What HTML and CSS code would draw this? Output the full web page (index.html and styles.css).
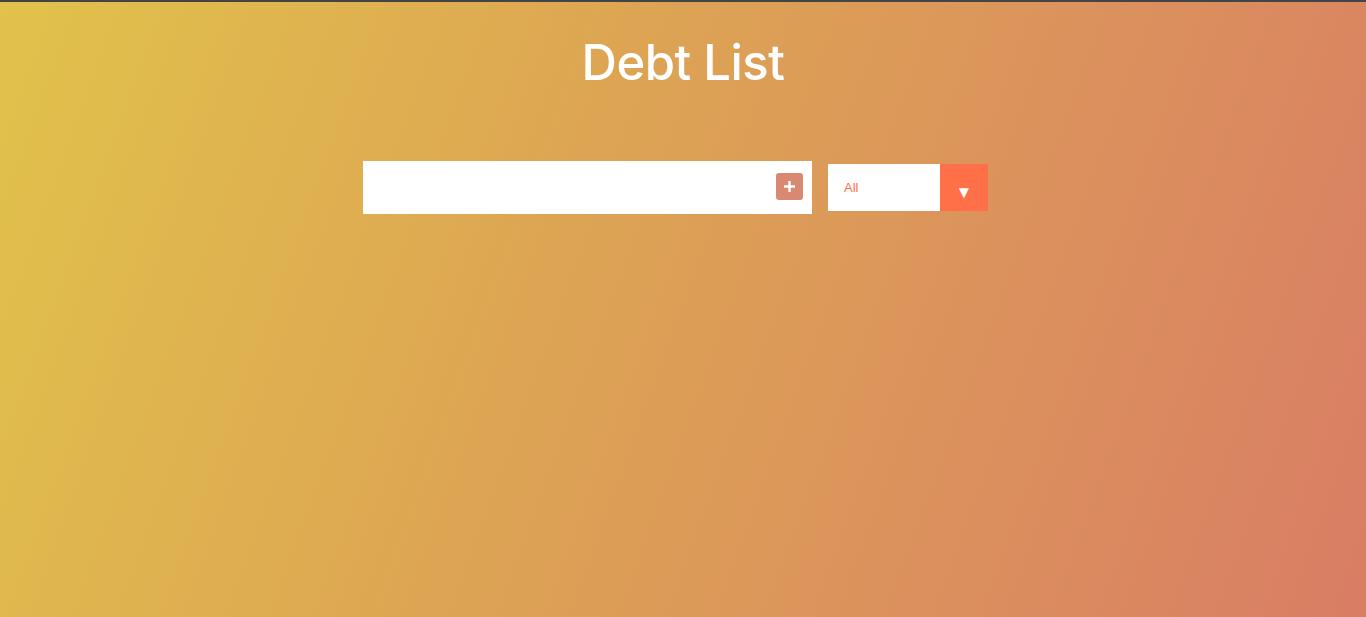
FILE: index.html
```html
<!DOCTYPE html>
<html>
<head>
<meta charset="utf-8">
<title>Debt List</title>
<link rel="stylesheet" href="styles.css">
</head>
<body>
<div class="topbar"></div>
<header class="header">
  <h1 class="title">Debt List</h1>
</header>
<form class="todo-form">
  <div class="input-wrap">
    <input class="todo-input" type="text">
    <button class="add-btn" type="button">
      <svg width="15" height="15" viewBox="0 0 15 15"><path d="M7.5 2v11M2 7.5h11" stroke="#fff" stroke-width="2.4" fill="none"/></svg>
    </button>
  </div>
  <div class="select">
    <span class="select-text">All</span>
    <span class="select-arrow">▼</span>
  </div>
</form>
</body>
</html>
```
FILE: styles.css
```css
* { box-sizing: border-box; }
html, body { height: 100%; }
body {
  margin: 0;
  font-family: "Open Sans", "Liberation Sans", sans-serif;
  background: linear-gradient(110deg, #e1c24b 0%, #dda553 40%, #db8e5e 75%, #d97d64 100%);
  color: #fff;
  overflow: hidden;
}
.topbar { height: 2px; background: #444; }
.header {
  display: flex;
  justify-content: center;
  padding-top: 30px;
}
.title {
  margin: 0;
  font-family: "Inter", "Noto Sans", sans-serif;
  font-weight: 500;
  font-size: 49px;
  letter-spacing: -0.5px;
  line-height: 62px;
}
.todo-form {
  display: flex;
  justify-content: center;
  align-items: center;
  gap: 16px;
  margin-top: 67px;
  padding-right: 15px;
}
.input-wrap {
  width: 449px;
  height: 53px;
  background: #fff;
  display: flex;
  align-items: center;
  padding-right: 9px;
}
.todo-input {
  flex: 1;
  border: none;
  outline: none;
  height: 100%;
  background: transparent;
  font-size: 18px;
  padding: 0 12px;
}
.add-btn {
  width: 27px;
  height: 27px;
  margin-bottom: 2px;
  border: none;
  padding: 0;
  border-radius: 3px;
  background: #d98871;
  display: flex;
  align-items: center;
  justify-content: center;
}
.select {
  width: 160px;
  height: 47px;
  background: #fff;
  display: flex;
  align-items: center;
}
.select-text {
  flex: 1;
  padding-left: 16px;
  font-family: "Liberation Sans", sans-serif;
  font-size: 13px;
  color: #ff6e46;
}
.select-arrow {
  width: 48px;
  height: 100%;
  background: #ff7048;
  display: flex;
  align-items: center;
  justify-content: center;
  font-size: 17px;
  padding-top: 8px;
  color: #fff;
}
```
